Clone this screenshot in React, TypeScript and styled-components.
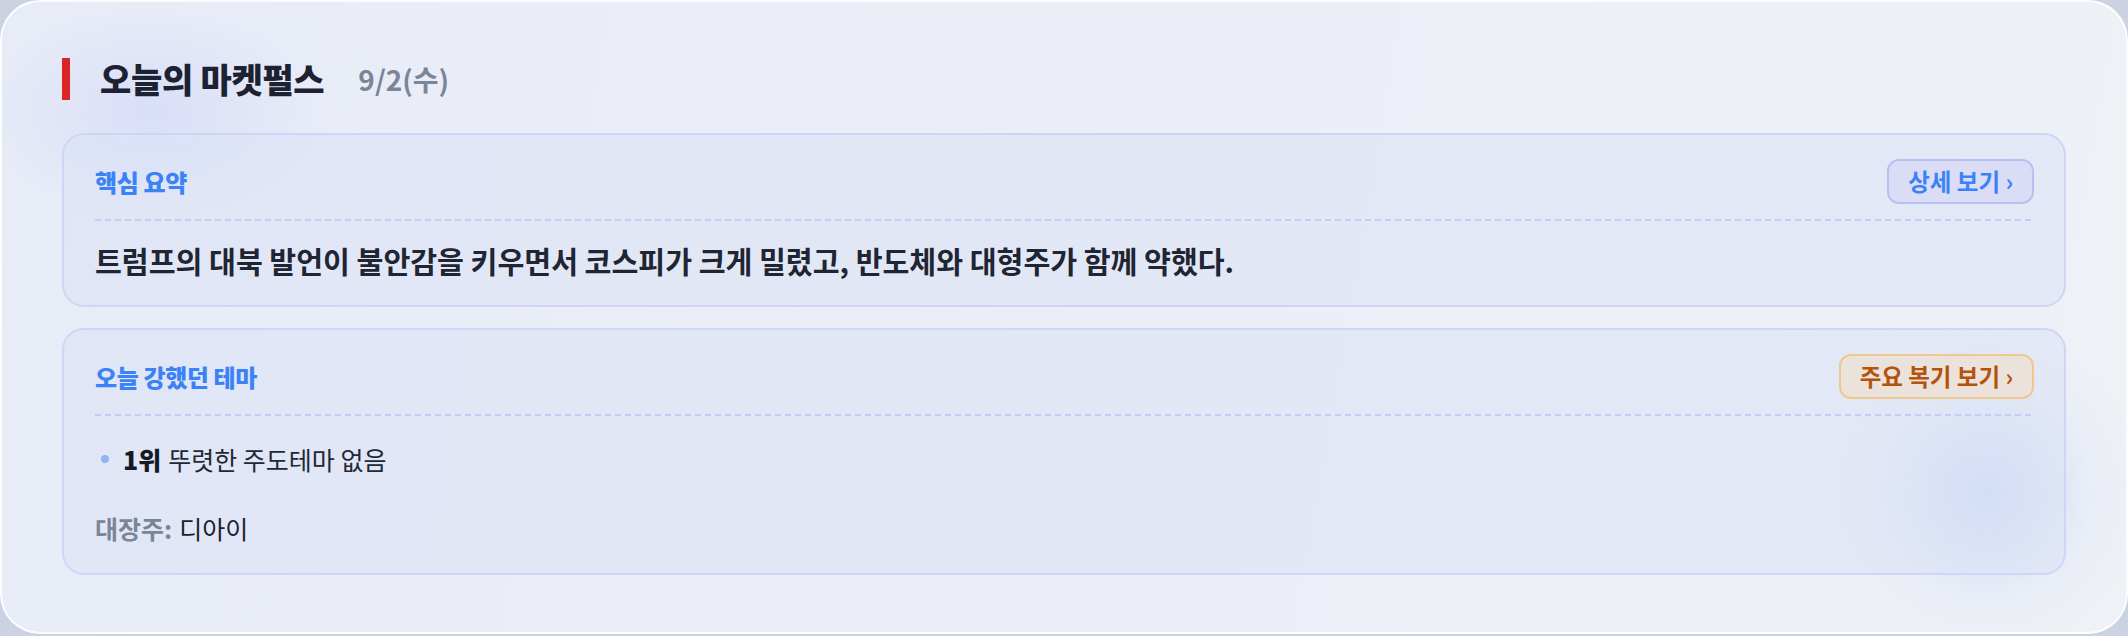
import React from "react";
import styled, { createGlobalStyle } from "styled-components";

const GlobalStyle = createGlobalStyle`
  html, body {
    margin: 0;
    padding: 0;
    background: #cbd3e3;
  }
  body {
    font-family: "Noto Sans CJK KR", "Noto Sans", sans-serif;
  }
  * { box-sizing: border-box; }
`;

const Panel = styled.section`
  position: relative;
  width: 2128px;
  height: 634px;
  border: 2px solid rgba(255, 255, 255, 0.85);
  border-radius: 40px;
  padding: 56px 60px 56px 60px;
  display: flex;
  flex-direction: column;
  background:
    radial-gradient(circle at 1983px 490px, rgba(198, 213, 246, 0.9) 0px, rgba(206, 218, 246, 0.6) 55px, rgba(222, 229, 246, 0.25) 110px, rgba(226, 232, 246, 0) 160px),
    radial-gradient(ellipse 180px 110px at 150px 110px, rgba(214, 220, 248, 0.85) 0px, rgba(226, 230, 248, 0) 100%),
    linear-gradient(100deg, #e8ecf7 0%, #ebeef7 45%, #eef1f6 100%);
  overflow: hidden;
`;

const TitleRow = styled.header`
  display: flex;
  align-items: center;
  height: 42px;
  margin-bottom: 33px;
`;

const RedBar = styled.span`
  width: 8px;
  height: 42px;
  background: #dc2626;
  margin-right: 30px;
`;

const Title = styled.h1`
  margin: 0;
  font-size: 34px;
  font-weight: 800;
  color: #1c2231;
  letter-spacing: -0.3px;
  line-height: 42px;
`;

const DateText = styled.span`
  margin-left: 34px;
  font-size: 28px;
  font-weight: 700;
  color: #7b8598;
  line-height: 42px;
`;

const Cards = styled.div`
  display: flex;
  flex-direction: column;
  gap: 21px;
`;

const Card = styled.article<{ $h: number }>`
  height: ${(p) => p.$h}px;
  border: 2px solid #d0d4f6;
  border-radius: 22px;
  padding: 23px 30px 0 31px;
  background: rgba(218, 226, 246, 0.55);
  display: flex;
  flex-direction: column;
`;

const CardHeader = styled.div`
  display: flex;
  align-items: center;
  justify-content: space-between;
  height: 63px;
  padding-bottom: 16px;
  background-image: repeating-linear-gradient(
    90deg,
    #c6ccf4 0px,
    #c6ccf4 6px,
    transparent 6px,
    transparent 10px
  );
  background-size: 100% 2px;
  background-repeat: no-repeat;
  background-position: left bottom;
`;

const CardTitle = styled.h2`
  margin: 0;
  font-size: 24px;
  font-weight: 800;
  color: #3b82f6;
  letter-spacing: -0.4px;
`;

const ActionButton = styled.button<{ $tone: "blue" | "amber" }>`
  height: 45px;
  padding: 0 19px;
  border-radius: 12px;
  border: 2px solid ${(p) => (p.$tone === "blue" ? "#babff2" : "#efc88f")};
  background: ${(p) => (p.$tone === "blue" ? "#dbddf7" : "#ebe2dc")};
  color: ${(p) => (p.$tone === "blue" ? "#3b82f6" : "#b4530c")};
  font-family: inherit;
  font-size: 23.5px;
  font-weight: 600;
  line-height: 41px;
  cursor: pointer;
`;

const Summary = styled.p`
  margin: 19px 0 0 0;
  font-size: 29.2px;
  font-weight: 600;
  line-height: 40px;
  color: #1f2532;
`;

const ThemeList = styled.ul`
  list-style: none;
  margin: 25px 0 0 0;
  padding: 0 0 0 6px;
`;

const ThemeItem = styled.li`
  display: flex;
  align-items: center;
  font-size: 25px;
  line-height: 36px;
  color: #222836;
`;

const Dot = styled.span`
  width: 8px;
  height: 8px;
  border-radius: 50%;
  background: #8db4f6;
  margin-right: 14px;
`;

const Rank = styled.strong`
  font-weight: 800;
  color: #141a26;
  margin-right: 7px;
`;

const Leader = styled.p`
  margin: 33px 0 0 0;
  font-size: 25px;
  line-height: 36px;
  color: #1a1f2b;
`;

const LeaderLabel = styled.span`
  font-weight: 700;
  color: #7b8598;
  margin-right: 7px;
`;

export default function App() {
  return (
    <>
      <GlobalStyle />
      <Panel>
        <TitleRow>
          <RedBar />
          <Title>오늘의 마켓펄스</Title>
          <DateText>9/2(수)</DateText>
        </TitleRow>
        <Cards>
          <Card $h={174}>
            <CardHeader>
              <CardTitle>핵심 요약</CardTitle>
              <ActionButton $tone="blue">상세 보기 ›</ActionButton>
            </CardHeader>
            <Summary>
              트럼프의 대북 발언이 불안감을 키우면서 코스피가 크게 밀렸고, 반도체와 대형주가 함께 약했다.
            </Summary>
          </Card>
          <Card $h={247}>
            <CardHeader>
              <CardTitle>오늘 강했던 테마</CardTitle>
              <ActionButton $tone="amber">주요 복기 보기 ›</ActionButton>
            </CardHeader>
            <ThemeList>
              <ThemeItem>
                <Dot />
                <Rank>1위</Rank>
                뚜렷한 주도테마 없음
              </ThemeItem>
            </ThemeList>
            <Leader>
              <LeaderLabel>대장주:</LeaderLabel>디아이
            </Leader>
          </Card>
        </Cards>
      </Panel>
    </>
  );
}
